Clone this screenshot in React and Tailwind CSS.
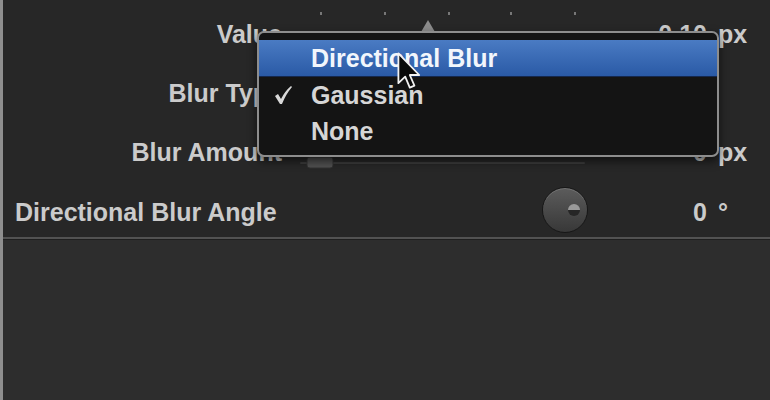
import React from 'react';

// Inspector row: label column, control column, value column, unit column
const Row = ({ label, height, children, value, unit }) => (
  <div className={`flex items-center ${height}`}>
    <div className="w-[279px] text-right">{label}</div>
    <div className="w-[316px] h-full relative">{children}</div>
    <div className="w-[109px] text-right">{value}</div>
    <div className="w-[11px]" />
    <div className="flex-1">{unit}</div>
  </div>
);

const ValueSlider = () => (
  <svg width="316" height="59" viewBox="0 0 316 59" className="block">
    {[39, 103, 167, 229, 293].map((x) => (
      <rect key={x} x={x - 1} y="7" width="2" height="3" fill="#777" />
    ))}
    <path d="M139 27 L146 15 L153 27 Z" fill="#8c8c8c" />
    <rect x="139" y="27" width="14" height="14" fill="#6a6a6a" />
  </svg>
);

const AmountSlider = () => (
  <svg width="316" height="59" viewBox="0 0 316 59" className="block">
    <rect x="18" y="39" width="285" height="2" rx="1" fill="#3c3c3c" />
    <rect x="25" y="34" width="26" height="11" rx="3" fill="#505050" stroke="#333" />
  </svg>
);

const Dial = () => (
  <div className="w-[46px] h-[46px] rounded-full border border-[#171717] bg-gradient-to-b from-[#5c5c5c] to-[#383838] shadow-[inset_0_1px_0_rgba(255,255,255,0.15)] flex items-center justify-end pr-[7px]">
    <div className="w-[12px] h-[12px] rounded-full bg-gradient-to-b from-[#9a9a9a] from-50% to-[#262626] to-50%" />
  </div>
);

const Check = () => (
  <svg width="20" height="20" viewBox="0 0 20 20" className="block">
    <path d="M2 11 L5 9 L8 14 Q12 6 18 1 L19 2 Q13 9 9 19 L7 19 Z" fill="#d8d8d8" />
  </svg>
);

const Cursor = () => (
  <svg width="24" height="38" viewBox="0 0 12 19" className="block">
    <path
      d="M0.7 0.7 L0.7 15.6 L4.1 12.3 L6.4 17.8 L8.7 16.8 L6.4 11.5 L11.1 11.5 Z"
      fill="#0a0a0a"
      stroke="#f2f2f2"
      strokeWidth="0.9"
      strokeLinejoin="round"
    />
  </svg>
);

export default function App() {
  const items = [
    { name: 'Directional Blur', active: true, h: 'h-[37px]' },
    { name: 'Gaussian', checked: true, h: 'h-[36px]' },
    { name: 'None', h: 'h-[37px]' },
  ];

  return (
    <div className="relative w-[770px] h-[400px] overflow-hidden flex font-['Liberation_Sans',Arial,sans-serif] font-bold text-[25px] leading-none text-[#cbcbcb]">
      {/* Left window edge */}
      <div className="w-[3px] bg-[#8e8e8e] shrink-0" />

      <div className="flex-1 flex flex-col bg-[#2d2d2d]">
        {/* Parameters */}
        <div className="h-[237px] bg-[#272727] pt-[5px] flex flex-col">
          <Row label="Value" height="h-[59px]" value="0.10" unit="px">
            <ValueSlider />
          </Row>
          <Row label="Blur Type" height="h-[59px]" />
          <Row label="Blur Amount" height="h-[59px]" value="0" unit="px">
            <AmountSlider />
          </Row>
          <div className="flex items-center h-[55px]">
            <div className="w-[539px] pl-[12px] pt-[6px]">Directional Blur Angle</div>
            <Dial />
            <div className="w-[119px] text-right pt-[6px]">0</div>
            <div className="w-[11px]" />
            <div className="flex-1 pt-[6px]">°</div>
          </div>
        </div>
        <div className="h-[3px] bg-[#525252] border-b border-[#1f1f1f]" />
        <div className="flex-1" />
      </div>

      {/* Pop-up menu */}
      <div className="absolute left-[257px] top-[31px] w-[462px] h-[126px] rounded-[7px] border-2 border-[#8d8d8d] bg-[#141414] shadow-[0_4px_10px_rgba(0,0,0,0.6)] pt-[7px] overflow-hidden">
        {items.map((it) => (
          <div
            key={it.name}
            className={`flex items-center ${it.h} ${
              it.active
                ? 'bg-gradient-to-b from-[#4a7bc3] to-[#2a5aa6] border-b border-[#14284f] text-[#f2f6fc]'
                : 'text-[#d6d6d6]'
            }`}
          >
            <div className="w-[52px] pl-[14px]">{it.checked && <Check />}</div>
            <span>{it.name}</span>
          </div>
        ))}
      </div>

      {/* Mouse pointer */}
      <div className="absolute left-[397px] top-[52px]">
        <Cursor />
      </div>
    </div>
  );
}
